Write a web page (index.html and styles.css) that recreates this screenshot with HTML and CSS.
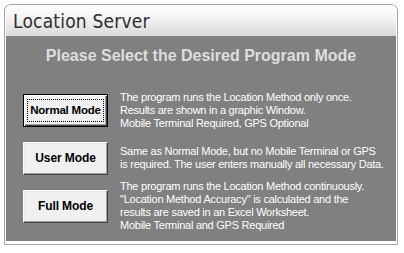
FILE: index.html
```html
<!DOCTYPE html>
<html>
<head>
<meta charset="utf-8">
<link rel="stylesheet" href="styles.css">
</head>
<body>
<div class="frame">
  <div class="titlebar">Location Server</div>
  <div class="panel">
    <div class="heading">Please Select the Desired Program Mode</div>
    <div class="modes">
      <div class="row">
        <button class="btn default"><span class="focus">Normal Mode</span></button>
        <div class="desc">The program runs the Location Method only once.<br>Results are shown in a graphic Window.<br>Mobile Terminal Required, GPS Optional</div>
      </div>
      <div class="row">
        <button class="btn">User Mode</button>
        <div class="desc">Same as Normal Mode, but no Mobile Terminal or GPS<br>is required. The user enters manually all necessary Data.</div>
      </div>
      <div class="row">
        <button class="btn">Full Mode</button>
        <div class="desc">The program runs the Location Method continuously.<br>"Location Method Accuracy" is calculated and the<br>results are saved in an Excel Worksheet.<br>Mobile Terminal and GPS Required</div>
      </div>
    </div>
  </div>
</div>
</body>
</html>
```

FILE: styles.css
```css
html, body {
  margin: 0;
  padding: 0;
  background: #ffffff;
}

.frame {
  margin: 4px 0 0 4px;
  width: 394px;
  height: 241px;
  box-sizing: border-box;
  border: 1px solid #a3a3a3;
  border-radius: 7px 7px 0 0;
  background: #ffffff;
  padding: 0 1px 3px 1px;
  display: flex;
  flex-direction: column;
}

.titlebar {
  height: 31px;
  box-sizing: border-box;
  padding: 5px 0 0 7px;
  border-radius: 6px 6px 0 0;
  background: linear-gradient(#ffffff 0%, #f4f4f4 40%, #d9d9d9 100%);
  font-family: "DejaVu Sans Condensed", "DejaVu Sans", sans-serif;
  font-size: 19px;
  line-height: 22px;
  color: #2e2e2e;
  letter-spacing: 0.2px;
}

.panel {
  flex: 1;
  background: #808080;
  display: flex;
  flex-direction: column;
}

.heading {
  margin-top: 10px;
  text-align: center;
  font-family: "Liberation Sans", Arial, sans-serif;
  font-weight: bold;
  font-size: 16px;
  line-height: 20px;
  color: #dedede;
}

.modes {
  margin-top: 20px;
  padding-left: 17px;
  display: grid;
  grid-template-columns: 85px 1fr;
  grid-auto-rows: 48px;
  column-gap: 12px;
}

.row {
  display: contents;
}

.btn {
  align-self: center;
  width: 85px;
  height: 33px;
  box-sizing: border-box;
  margin: 0;
  padding: 0;
  background: #f0f0f0;
  border: 1px solid;
  border-color: #ffffff #404040 #404040 #ffffff;
  box-shadow: inset -1px -1px #a0a0a0, inset 1px 1px #e8e8e8;
  font-family: "Liberation Sans", Arial, sans-serif;
  font-weight: bold;
  font-size: 12px;
  color: #000000;
  letter-spacing: -0.1px;
}

.btn.default {
  border-color: #000000;
  box-shadow: inset 1px 1px #ffffff, inset -1px -1px #404040, inset -2px -2px #a0a0a0;
  display: flex;
  padding: 4px 3px;
  font-size: 11.5px;
  letter-spacing: -0.2px;
}

.focus {
  flex: 1;
  display: flex;
  align-items: center;
  justify-content: center;
  outline: 1px dotted #000000;
  outline-offset: -1px;
}

.desc {
  align-self: center;
  font-family: "Liberation Sans", Arial, sans-serif;
  font-size: 11px;
  line-height: 13px;
  color: #ffffff;
  white-space: nowrap;
  letter-spacing: -0.25px;
}
```
